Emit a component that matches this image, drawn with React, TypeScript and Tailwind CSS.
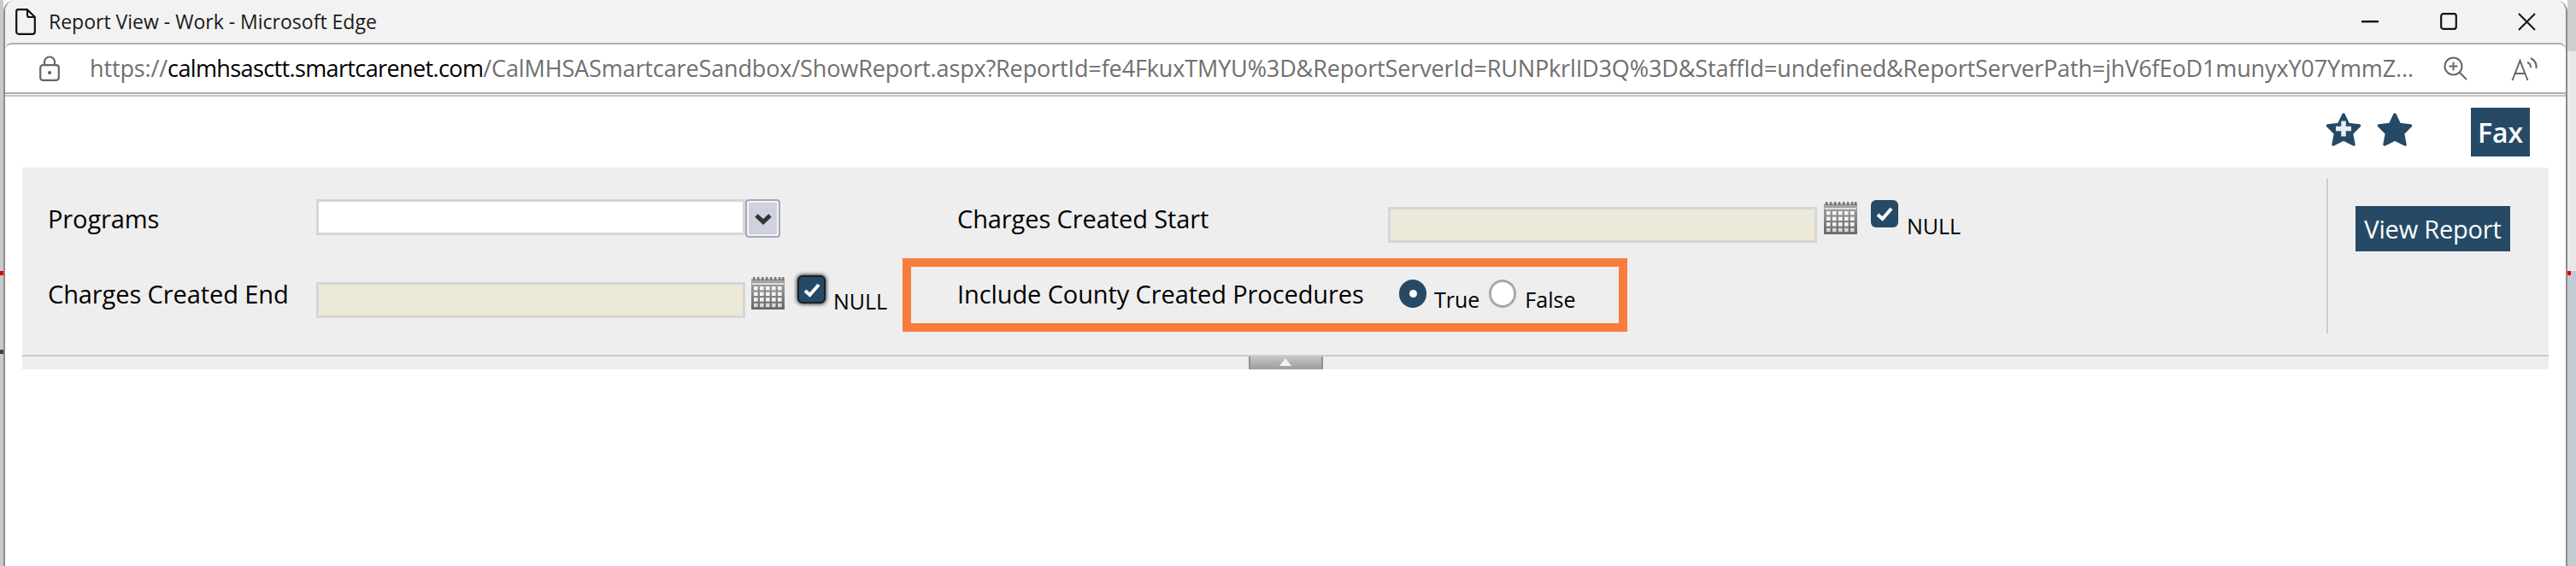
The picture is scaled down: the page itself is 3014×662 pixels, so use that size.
import React from "react";

const NAVY = "#264a66";
const formFont = "font-['Open_Sans',sans-serif]";

function Calendar() {
  const cells: React.ReactNode[] = [];
  for (let r = 0; r < 4; r++) {
    for (let c = 0; c < 5; c++) {
      cells.push(<rect key={`${r}-${c}`} x={3 + c * 7} y={11 + r * 6.6} width={4.6} height={4.4} fill={r === 3 ? "#d8d8d8" : "#f4f4f4"} />);
    }
  }
  return (
    <svg width="39" height="38" viewBox="0 0 39 38" className="shrink-0">
      <defs>
        <linearGradient id="calg" x1="0" y1="0" x2="0" y2="1">
          <stop offset="0" stopColor="#a8a8a8" />
          <stop offset="1" stopColor="#666666" />
        </linearGradient>
      </defs>
      <rect x="0" y="2" width="39" height="36" fill="url(#calg)" />
      {[2, 7, 12, 17, 22, 27, 32, 36].map((x) => (
        <rect key={x} x={x} y="0" width="2.4" height="4" fill="#777777" />
      ))}
      <rect x="1" y="7" width="37" height="2" fill="#dddddd" />
      {cells}
    </svg>
  );
}

function Check({ focused }: { focused?: boolean }) {
  return (
    <div
      className={
        focused
          ? "w-[33px] h-[33px] mt-[4px] shrink-0 rounded-[6px] bg-[#264a66] border-2 border-[#16222c] shadow-[0_0_4px_1px_rgba(0,0,0,0.75)] flex items-center justify-center"
          : "w-[32px] h-[32px] mt-[4px] shrink-0 rounded-[6px] bg-[#264a66] flex items-center justify-center"
      }
    >
      <svg width="22" height="20" viewBox="0 0 22 20">
        <path d="M3 11 L8.5 16 L19 4" fill="none" stroke="#ffffff" strokeWidth="4" />
      </svg>
    </div>
  );
}

function Label({ w, children }: { w: string; children: React.ReactNode }) {
  return <div className={`${w} h-[51px] flex items-center shrink-0 text-[29px] text-black whitespace-nowrap ${formFont} tracking-[-0.1px]`}>{children}</div>;
}

function DateInput() {
  return <div className="w-[502px] h-[42px] mt-[12px] shrink-0 bg-[#ece9d8] border-[3px] border-[#d6d6d6]" />;
}

function Null({ className }: { className: string }) {
  return <span className={`${className} text-[25px] leading-[30px] mt-[19px] text-black ${formFont}`}>NULL</span>;
}

function Star({ plus }: { plus?: boolean }) {
  return (
    <svg width="42" height="41" viewBox="0 0 42 41" className="shrink-0">
      <path d="M21 3 L26.5 14.5 L39.5 16 L30.5 25 L33 38 L21 32 L9 38 L11.5 25 L2.5 16 L15.5 14.5 Z" fill={NAVY} stroke={NAVY} strokeWidth="3.5" strokeLinejoin="round" />
      {plus && <path d="M21 10.5 V28.5 M12 19.5 H30" stroke="#e6eef6" strokeWidth="5.5" />}
    </svg>
  );
}

export default function App() {
  return (
    <div className="w-[3014px] h-[662px] flex bg-white overflow-hidden">
      {/* desktop sliver on the left */}
      <div className="w-[4px] shrink-0 flex flex-col bg-[#c9c9c9]">
        <div className="h-[317px] shrink-0" />
        <div className="h-[5px] shrink-0 bg-[#e00000]" />
        <div className="h-[87px] shrink-0" />
        <div className="h-[5px] shrink-0 bg-[#264a66]" />
      </div>

      {/* browser window */}
      <div className="w-[3000px] shrink-0 flex flex-col border-x-2 border-[#8c8c8c] rounded-t-[14px] overflow-hidden bg-white">
        <div className="bg-[#f2f2f2]">
          <div className="h-[50px] flex items-center pl-[12px] pr-[35px]">
            <svg width="24" height="31" viewBox="0 0 24 31" className="shrink-0">
              <path d="M3.5 1.2 H14 L22.8 10 V27 A2.8 2.8 0 0 1 20 29.8 H4 A2.8 2.8 0 0 1 1.2 27 V3.5 A2.3 2.3 0 0 1 3.5 1.2 Z M14 1.2 V8 A2 2 0 0 0 16 10 H22.8" fill="none" stroke="#111111" strokeWidth="2.2" strokeLinejoin="round" />
            </svg>
            <span className="ml-[15px] flex-1 text-[23px] text-[#1a1a1a] whitespace-nowrap font-['Open_Sans',sans-serif]">Report View - Work - Microsoft Edge</span>
            <svg width="20" height="4" viewBox="0 0 20 4" className="shrink-0">
              <rect width="20" height="2.4" y="1" fill="#111111" />
            </svg>
            <svg width="20" height="20" viewBox="0 0 20 20" className="ml-[72px] shrink-0">
              <rect x="1.2" y="1.2" width="17.6" height="17.6" rx="2.5" fill="none" stroke="#111111" strokeWidth="2.2" />
            </svg>
            <svg width="21" height="21" viewBox="0 0 21 21" className="ml-[71px] shrink-0">
              <path d="M1 1 L20 20 M20 1 L1 20" stroke="#111111" strokeWidth="2" />
            </svg>
          </div>
          <div className="h-[58px] flex items-center bg-white border-t-2 border-[#adadad] rounded-t-[8px] pl-[40px] pr-[33px]">
            <svg width="24" height="30" viewBox="0 0 24 30" className="shrink-0">
              <path d="M6 12 V7.5 A6 6 0 0 1 18 7.5 V12" fill="none" stroke="#666666" strokeWidth="2.2" />
              <rect x="1.2" y="11.2" width="21.6" height="17.6" rx="3" fill="none" stroke="#666666" strokeWidth="2.2" />
              <circle cx="12" cy="20" r="2" fill="#555555" />
            </svg>
            <div className="ml-[35px] flex-1 min-w-0 text-[27px] text-[#6f6f6f] whitespace-nowrap font-['Open_Sans',sans-serif] tracking-[-0.13px]">
              https://<span className="text-black tracking-[-0.62px]">calmhsasctt.smartcarenet.com</span>/CalMHSASmartcareSandbox/ShowReport.aspx?ReportId=fe4FkuxTMYU%3D&amp;ReportServerId=RUNPkrlID3Q%3D&amp;StaffId=undefined&amp;ReportServerPath=jhV6fEoD1munyxY07YmmZ...
            </div>
            <svg width="28" height="28" viewBox="0 0 28 28" className="shrink-0">
              <circle cx="11.5" cy="11.5" r="10" fill="none" stroke="#666666" strokeWidth="2" />
              <path d="M18.5 18.5 L27 27 M11.5 6.5 V16.5 M6.5 11.5 H16.5" fill="none" stroke="#666666" strokeWidth="2" />
            </svg>
            <svg width="31" height="29" viewBox="0 0 31 29" className="ml-[51px] shrink-0">
              <path d="M1.5 28 L10.5 5 L19.5 28 M4.5 20 H16.5" fill="none" stroke="#666666" strokeWidth="2" />
              <path d="M19 7 A6 6 0 0 1 23 13 M23 2 A12 12 0 0 1 29.5 14" fill="none" stroke="#666666" strokeWidth="2" />
            </svg>
          </div>
        </div>
        <div className="h-[2px] bg-[#adadad]" />
        <div className="h-[1px] bg-white" />
        <div className="h-[2px] bg-[#c2c2c2]" />

        <div className="flex-1 bg-white">
          {/* toolbar */}
          <div className="h-[83px] pt-[13px] flex items-start pr-[42px] justify-end">
            <div className="mt-[5px] flex gap-[18px]">
              <Star plus />
              <Star />
            </div>
            <div className={`ml-[68px] w-[69px] h-[57px] bg-[#264a66] text-white text-[32px] font-semibold flex items-center justify-center ${formFont}`}>Fax</div>
          </div>

          {/* parameter panel */}
          <div className="mx-[20px] h-[236px] bg-[#eeeeee] flex flex-col">
            <div className="h-[219px] flex">
              <div className="w-[2696px] pt-[34px] flex flex-col shrink-0">
                <div className="h-[72px] flex items-start">
                  <div className="w-[1030px] shrink-0 pl-[30px] flex items-start">
                    <Label w="w-[314px]">Programs</Label>
                    <div className="w-[502px] h-[42px] mt-[3px] shrink-0 bg-white border-[3px] border-[#d6d6d6]" />
                    <div className="w-[41px] h-[45px] mt-[3px] shrink-0 rounded-[4px] bg-[#cfd1de] border-2 border-[#a5a7b7] [box-shadow:inset_0_0_0_2px_#f4f4f8] flex items-center justify-center">
                      <svg width="22" height="14" viewBox="0 0 22 14">
                        <path d="M3 3 L11 10.5 L19 3" fill="none" stroke="#333333" strokeWidth="5" />
                      </svg>
                    </div>
                  </div>
                  <div className="pl-[64px] flex items-start">
                    <Label w="w-[504px]">Charges Created Start</Label>
                    <DateInput />
                    <div className="ml-[8px] mt-[6px]"><Calendar /></div>
                    <div className="ml-[16px]"><Check /></div>
                    <Null className="ml-[10px]" />
                  </div>
                </div>
                <div className="h-[86px] flex items-start">
                  <div className="w-[1030px] shrink-0 pl-[30px] pt-[16px] flex items-start">
                    <Label w="w-[314px]">Charges Created End</Label>
                    <DateInput />
                    <div className="ml-[7px] mt-[6px]"><Calendar /></div>
                    <div className="ml-[15px]"><Check focused /></div>
                    <Null className="ml-[9px]" />
                  </div>
                  <div className="w-[848px] h-[86px] shrink-0 border-[10px] border-[#f97c3f] pl-[54px] pt-[6px] flex items-start">
                    <Label w="w-[504px]">Include County Created Procedures</Label>
                    <div className="ml-[13px] mt-[9px] w-[32px] h-[33px] shrink-0 rounded-full bg-[#264a66] flex items-center justify-center">
                      <div className="w-[9px] h-[9px] rounded-full bg-white" />
                    </div>
                    <span className={`ml-[9px] mt-[17px] text-[25px] leading-[30px] text-black ${formFont}`}>True</span>
                    <div className="ml-[11px] mt-[9px] w-[32px] h-[33px] shrink-0 rounded-full bg-white border-[3px] border-[#a8a8a8]" />
                    <span className={`ml-[10px] mt-[17px] text-[25px] leading-[30px] text-black ${formFont}`}>False</span>
                  </div>
                </div>
              </div>
              <div className="w-[2px] h-[181px] mt-[13px] shrink-0 bg-[#cccccc]" />
              <div className={`ml-[32px] mt-[45px] w-[181px] h-[53px] shrink-0 bg-[#264a66] text-white text-[29px] flex items-center justify-center whitespace-nowrap ${formFont} tracking-[-0.2px]`}>View Report</div>
            </div>
            <div className="h-[2px] bg-[#cccccc]" />
            <div className="h-[15px] flex justify-center">
              <div className="w-[87px] h-[15px] bg-gradient-to-b from-[#c6c6c6] to-[#9c9c9c] border-x-2 border-[#8f8f8f] flex items-start justify-center">
                <svg width="14" height="10" viewBox="0 0 14 10" className="mt-[2px]">
                  <path d="M7 0 L14 9 H0 Z" fill="#f2f2f2" />
                </svg>
              </div>
            </div>
          </div>
        </div>
      </div>

      {/* desktop sliver on the right */}
      <div className="w-[10px] shrink-0 flex flex-col bg-[#c3ccd4]">
        <div className="h-[60px] shrink-0 bg-[#cfcfcf]" />
        <div className="h-[257px] shrink-0 bg-[#e8e8e8]" />
        <div className="h-[5px] shrink-0 w-[4px] bg-[#e00000]" />
      </div>
    </div>
  );
}
